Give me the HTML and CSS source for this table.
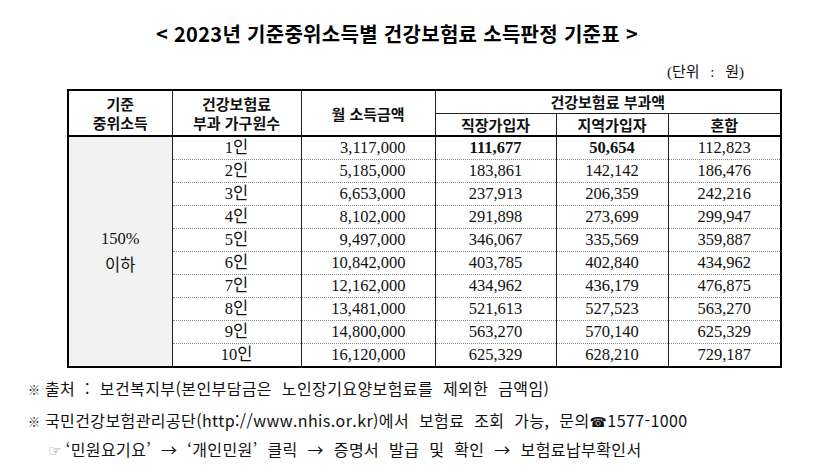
FILE: index.html
```html
<!DOCTYPE html>
<html lang="ko">
<head>
<meta charset="utf-8">
<link rel="stylesheet" href="styles.css">
</head>
<body>
<div class="page">
  <h1 class="title">&lt; 2023년 기준중위소득별 건강보험료 소득판정 기준표 &gt;</h1>
  <div class="unit">(단위 : 원)</div>
  <table class="grid">
    <colgroup>
      <col class="c1"><col class="c2"><col class="c3"><col class="c4"><col class="c5"><col class="c6">
    </colgroup>
    <thead>
      <tr class="h1">
        <th rowspan="2">기준<br>중위소득</th>
        <th rowspan="2">건강보험료<br>부과 가구원수</th>
        <th rowspan="2">월 소득금액</th>
        <th colspan="3" class="group">건강보험료 부과액</th>
      </tr>
      <tr class="h2">
        <th>직장가입자</th>
        <th>지역가입자</th>
        <th>혼합</th>
      </tr>
    </thead>
    <tbody>
      <tr><td rowspan="10" class="level">150%<br>이하</td><td class="n">1인</td><td class="inc">3,117,000</td><td class="b">111,677</td><td class="b">50,654</td><td>112,823</td></tr>
      <tr><td class="n">2인</td><td class="inc">5,185,000</td><td>183,861</td><td>142,142</td><td>186,476</td></tr>
      <tr><td class="n">3인</td><td class="inc">6,653,000</td><td>237,913</td><td>206,359</td><td>242,216</td></tr>
      <tr><td class="n">4인</td><td class="inc">8,102,000</td><td>291,898</td><td>273,699</td><td>299,947</td></tr>
      <tr><td class="n">5인</td><td class="inc">9,497,000</td><td>346,067</td><td>335,569</td><td>359,887</td></tr>
      <tr><td class="n">6인</td><td class="inc">10,842,000</td><td>403,785</td><td>402,840</td><td>434,962</td></tr>
      <tr><td class="n">7인</td><td class="inc">12,162,000</td><td>434,962</td><td>436,179</td><td>476,875</td></tr>
      <tr><td class="n">8인</td><td class="inc">13,481,000</td><td>521,613</td><td>527,523</td><td>563,270</td></tr>
      <tr><td class="n">9인</td><td class="inc">14,800,000</td><td>563,270</td><td>570,140</td><td>625,329</td></tr>
      <tr class="last"><td class="n">10인</td><td class="inc">16,120,000</td><td>625,329</td><td>628,210</td><td>729,187</td></tr>
    </tbody>
  </table>
  <div class="notes">
    <p class="note"><span class="mark">※</span>출처 : 보건복지부(본인부담금은 노인장기요양보험료를 제외한 금액임)</p>
    <p class="note n2"><span class="mark">※</span>국민건강보험관리공단<span class="url">(http://www.nhis.or.kr)</span>에서 보험료 조회 가능, 문의<span class="tel">☎</span>1577-1000</p>
    <p class="note n3"><span class="hand">☞</span>‘민원요기요’ → ‘개인민원’ 클릭 → 증명서 발급 및 확인 → 보험료납부확인서</p>
  </div>
</div>
</body>
</html>
```
FILE: styles.css
```css
html, body {
  margin: 0;
  padding: 0;
  background: #fff;
  color: #000;
}
body {
  font-family: "Noto Sans CJK KR", "Noto Sans", sans-serif;
}
.page {
  width: 715px;
  margin-left: 67px;
}
.title {
  margin: 0;
  padding-top: 20px;
  padding-left: 89px;
  height: 28px;
  line-height: 28px;
  font-size: 20px;
  font-weight: 700;
  letter-spacing: 0.3px;
  white-space: nowrap;
}
.unit {
  margin-top: 14px;
  height: 20px;
  line-height: 20px;
  font-family: "Liberation Serif", "Noto Sans CJK KR", serif;
  font-size: 15px;
  word-spacing: 7px;
  text-align: right;
  padding-right: 38px;
  color: #111;
}
.grid {
  margin-top: 7px;
  border-collapse: collapse;
  table-layout: fixed;
  width: 713px;
  border: 2px solid #000;
}
.c1 { width: 104px; }
.c2 { width: 129px; }
.c3 { width: 134px; }
.c4 { width: 121px; }
.c5 { width: 112px; }
.c6 { width: 113px; }
.grid th {
  font-family: "Noto Sans CJK KR", sans-serif;
  font-weight: 700;
  font-size: 15px;
  line-height: 19px;
  padding: 0;
  border: 1px solid #222;
  color: #111;
}
.grid thead tr.h2 th,
.grid thead th[rowspan] {
  border-bottom: 2px solid #000;
}
.grid tr.h1 { height: 23px; }
.grid tr.h2 { height: 23px; }
.grid td {
  font-family: "Liberation Serif", "Noto Sans CJK KR", serif;
  font-size: 16.5px;
  height: 22px;
  line-height: 20px;
  padding: 0;
  text-align: center;
  border-left: 1px solid #222;
  border-right: 1px solid #222;
  border-bottom: 1px dotted #8a8a8a;
  color: #111;
}
.grid tr.last td { border-bottom: 2px solid #000; }
.grid td.level {
  background: #f2f2f2;
  line-height: 27px;
  vertical-align: middle;
  border-bottom: 2px solid #000;
}
.grid td.inc {
  text-align: right;
  padding-right: 29px;
}
.grid td.b { font-weight: 700; }
.notes {
  margin-left: -39px;
  margin-top: 9px;
  font-size: 16px;
  color: #111;
}
.note {
  margin: 0;
  height: 22px;
  line-height: 22px;
  white-space: nowrap;
  letter-spacing: 0.4px;
  word-spacing: 5px;
}
.note.n2 { margin-top: 10px; }
.note.n3 { margin-top: 7px; padding-left: 20px; }
.url { letter-spacing: 0.4px; }
.mark {
  display: inline-block;
  width: 17px;
  font-size: 12px;
  letter-spacing: 0;
}
.tel {
  font-family: "DejaVu Sans", sans-serif;
  font-size: 14px;
}
.hand {
  font-family: "DejaVu Sans", sans-serif;
  color: #777;
  font-size: 15px;
  margin-right: 4px;
}
```
